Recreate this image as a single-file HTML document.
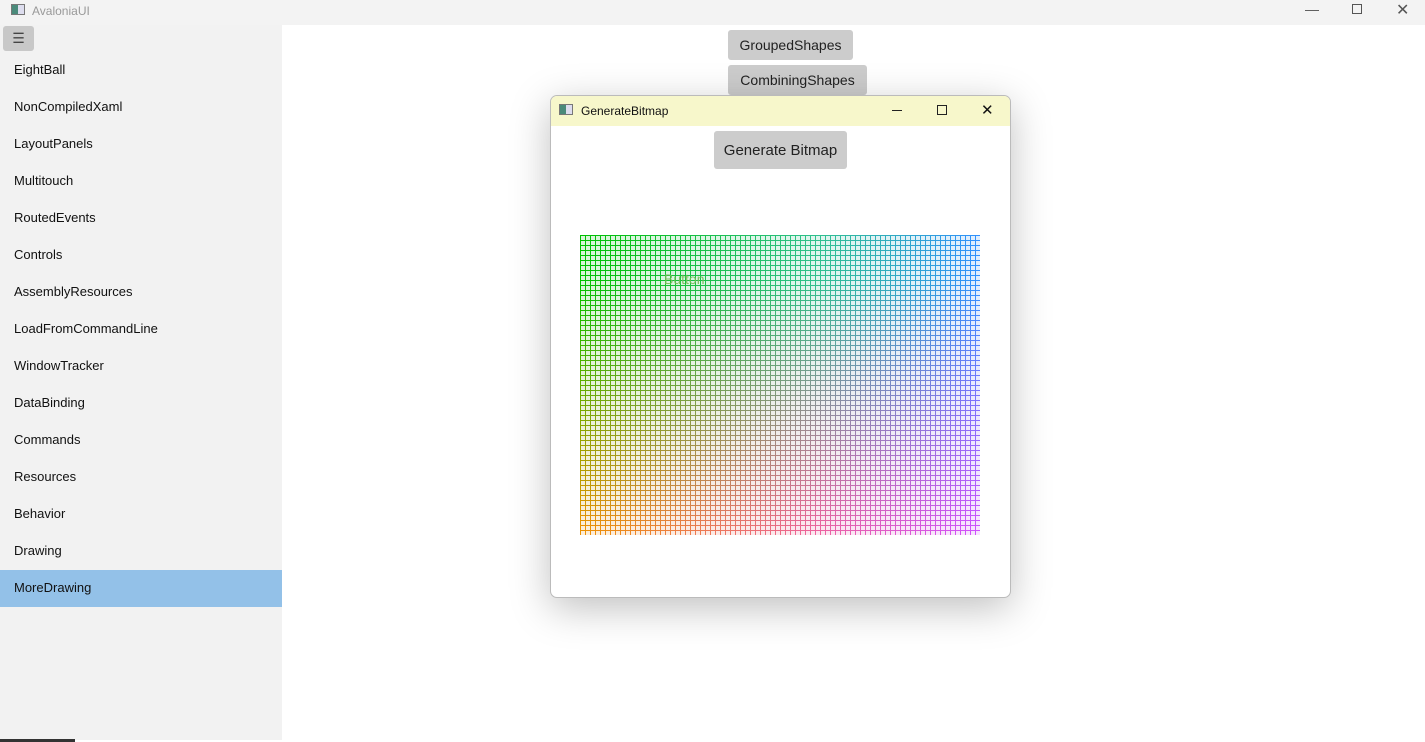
<!DOCTYPE html>
<html><head><style>
*{margin:0;padding:0;box-sizing:border-box}
body{width:1425px;height:742px;overflow:hidden;background:#fff;font-family:"Liberation Sans",sans-serif;position:relative}
.title{position:absolute;left:0;top:0;width:1425px;height:25px;background:#f3f3f3;color:#999;font-size:12px}
.side{position:absolute;left:0;top:25px;width:282px;height:715px;background:#f2f2f2}
.item{position:absolute;left:14px;font-size:13px;color:#111}
.sel{position:absolute;left:0;top:545px;width:282px;height:37px;background:#93c1e8}
.btn{position:absolute;background:#ccc;border-radius:3px;font-size:14px;color:#222;text-align:center}
.win{position:absolute;left:550px;top:95px;width:461px;height:503px;background:#fff;border:1px solid #bbb;border-radius:7px;box-shadow:0 10px 40px rgba(0,0,0,.25);overflow:hidden}
.wt{height:30px;background:#f7f7cb;font-size:12px;color:#111;position:relative}
.grid{position:absolute;left:580px;top:235px;width:400px;height:300px}
.g{position:absolute;inset:0}
.c1{background:linear-gradient(to right,#00c000,#30c090 60%,#3090ff)}
.c2{background:linear-gradient(to right,#f09000,#f060a0 60%,#d050ff);-webkit-mask-image:linear-gradient(to bottom,transparent 15%,#000 100%);mask-image:linear-gradient(to bottom,transparent 15%,#000 100%)}
.lines{position:absolute;inset:0;-webkit-mask-image:repeating-linear-gradient(to right,#000 0 1px,transparent 1px 5px),repeating-linear-gradient(to bottom,#000 0 1px,transparent 1px 5px);mask-image:repeating-linear-gradient(to right,#000 0 1px,transparent 1px 5px),repeating-linear-gradient(to bottom,#000 0 1px,transparent 1px 5px)}
.tint{position:absolute;inset:0;opacity:.15}
</style></head><body>
<div class="title"><div style="position:absolute;left:11px;top:4px;width:14px;height:11px;border:1px solid #777;background:linear-gradient(90deg,#4a8a7a 50%,#dde 50%)"></div><span style="position:absolute;left:32px;top:4px">AvaloniaUI</span>
<span style="position:absolute;left:1305px;top:1px;color:#555;font-size:14px">&#8212;</span>
<div style="position:absolute;left:1352px;top:4px;width:10px;height:10px;border:1px solid #555"></div>
<span style="position:absolute;left:1396px;top:0;color:#555;font-size:16px">&#10005;</span></div>
<div class="side">
<div style="position:absolute;left:3px;top:1px;width:31px;height:25px;background:#c8c8c8;border-radius:3px;text-align:center;font-size:14px;line-height:24px;color:#444">&#9776;</div>
<div class="sel"></div>
</div>
<div style="position:absolute;top:0;left:0">
<span class="item" style="top:62px">EightBall</span>
<span class="item" style="top:99px">NonCompiledXaml</span>
<span class="item" style="top:136px">LayoutPanels</span>
<span class="item" style="top:173px">Multitouch</span>
<span class="item" style="top:210px">RoutedEvents</span>
<span class="item" style="top:247px">Controls</span>
<span class="item" style="top:284px">AssemblyResources</span>
<span class="item" style="top:321px">LoadFromCommandLine</span>
<span class="item" style="top:358px">WindowTracker</span>
<span class="item" style="top:395px">DataBinding</span>
<span class="item" style="top:432px">Commands</span>
<span class="item" style="top:469px">Resources</span>
<span class="item" style="top:506px">Behavior</span>
<span class="item" style="top:543px">Drawing</span>
<span class="item" style="top:580px">MoreDrawing</span>
</div>
<div style="position:absolute;left:0;top:739px;width:75px;height:3px;background:#333"></div>
<div class="btn" style="left:728px;top:30px;width:125px;height:30px;line-height:30px">GroupedShapes</div>
<div class="btn" style="left:728px;top:65px;width:139px;height:30px;line-height:30px">CombiningShapes</div>
<div class="win"><div class="wt"><div style="position:absolute;left:8px;top:8px;width:14px;height:11px;border:1px solid #777;background:linear-gradient(90deg,#4a8a7a 50%,#dde 50%)"></div><span style="position:absolute;left:30px;top:8px">GenerateBitmap</span>
<div style="position:absolute;left:341px;top:14px;width:10px;height:1px;background:#222"></div>
<div style="position:absolute;left:386px;top:9px;width:10px;height:10px;border:1px solid #222"></div>
<span style="position:absolute;left:430px;top:5px;font-size:15px">&#10005;</span></div>
<div class="btn" style="left:163px;top:35px;width:133px;height:38px;line-height:40px;position:absolute;font-size:15px">Generate Bitmap</div>
</div>
<div class="grid">
<div class="tint"><div class="g c1"></div><div class="g c2"></div></div>
<div class="lines"><div class="g c1"></div><div class="g c2"></div></div>
<span style="position:absolute;left:84px;top:36px;font-size:14px;color:#7b5;opacity:.9">Button</span>
</div>
</body></html>
